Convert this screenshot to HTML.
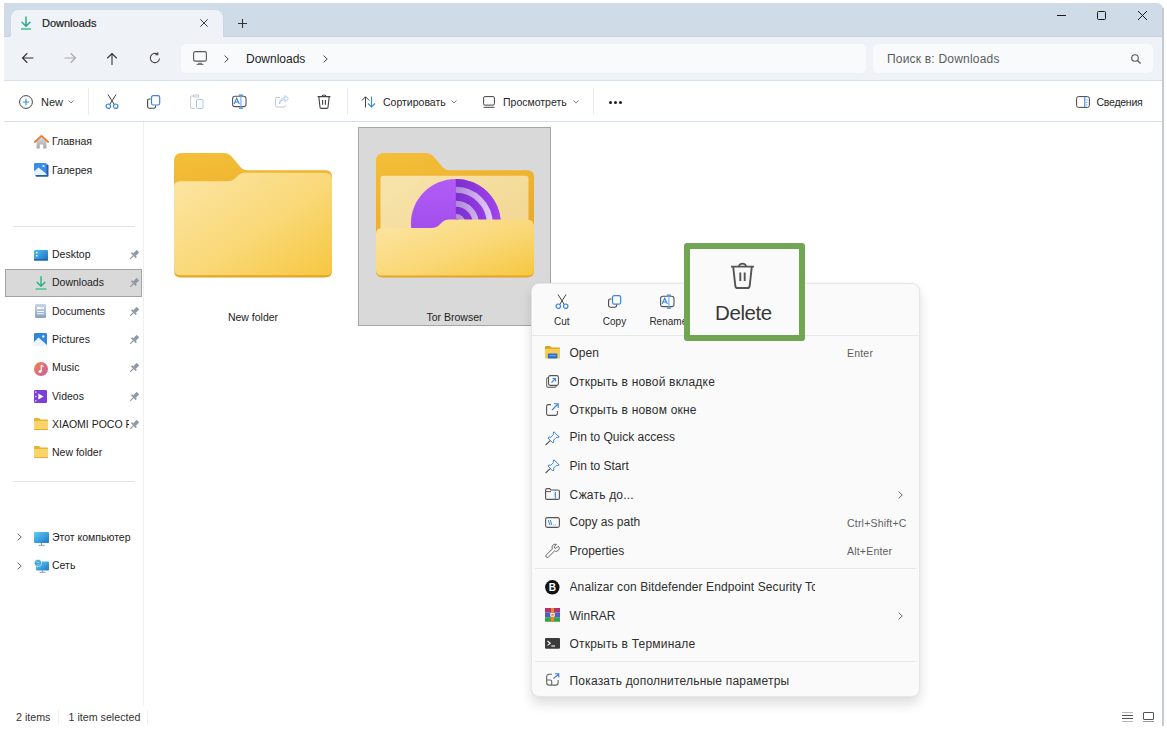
<!DOCTYPE html>
<html><head><meta charset="utf-8">
<style>
*{margin:0;padding:0;box-sizing:border-box}
html,body{width:1167px;height:729px;overflow:hidden;background:#fff;font-family:"Liberation Sans",sans-serif;color:#1a1a1a;position:relative}
.a{position:absolute}
.t{position:absolute;white-space:nowrap;line-height:1;font-size:11px}
svg.i{position:absolute;overflow:visible}
.side{font-size:10.5px;color:#1c1c1c}
.mi{font-size:12px;color:#222}
.sc{font-size:10px;color:#666}
</style></head><body>
<!-- ===== title bar ===== -->
<div class="a" style="left:4px;top:3px;width:1159px;height:34px;background:#cfdce8;border-radius:0 6px 0 0"></div>
<div class="a" style="left:1162px;top:8px;width:2px;height:718px;background:#c5cad3"></div>
<!-- tab -->
<div class="a" style="left:11px;top:10px;width:212px;height:27px;background:#eff3f8;border-radius:8px 8px 0 0"></div>
<div class="a" style="left:4px;top:33px;width:7px;height:4px;background:#eff3f8"></div>
<div class="a" style="left:4px;top:33px;width:7px;height:4px;background:#cfdce8;border-bottom:1px solid #c6d3df;border-right:1px solid #c6d3df;border-radius:0 0 3px 0"></div>
<div class="a" style="left:223px;top:33px;width:4px;height:4px;background:#eff3f8"></div>
<div class="a" style="left:223px;top:36px;width:939px;height:1px;background:#c6d3df"></div>
<div class="a" style="left:223px;top:10px;width:939px;height:27px;background:#cfdce8;border-bottom:1px solid #c6d3df;border-left:1px solid #cad7e3;border-radius:0 0 0 3px"></div>
<!-- tab content -->
<svg class="i" style="left:19.5px;top:16px" width="12" height="14" viewBox="0 0 12 14">
  <defs><linearGradient id="dl" x1="0" y1="0" x2="1" y2="1"><stop offset="0" stop-color="#3fc08a"/><stop offset="1" stop-color="#2a9d9a"/></linearGradient></defs>
  <path d="M6 1 V10 M2 6.3 L6 10.3 L10 6.3" stroke="url(#dl)" stroke-width="1.6" fill="none" stroke-linecap="round" stroke-linejoin="round"/>
  <path d="M1 13 H11" stroke="#3fbf8c" stroke-width="1.5"/>
</svg>
<div class="t" style="left:42px;top:18px;font-size:11px;-webkit-text-stroke:0.2px #1f1f1f;color:#1f1f1f">Downloads</div>
<svg class="i" style="left:200px;top:19px" width="8" height="8" viewBox="0 0 8 8"><path d="M0.3 0.3 L7.7 7.7 M7.7 0.3 L0.3 7.7" stroke="#333" stroke-width="0.95"/></svg>
<svg class="i" style="left:238px;top:19px" width="9" height="9" viewBox="0 0 9 9"><path d="M4.5 0 V9 M0 4.5 H9" stroke="#333" stroke-width="1.1"/></svg>
<!-- window controls -->
<div class="a" style="left:1057px;top:15px;width:9px;height:1px;background:#1a1a1a"></div>
<div class="a" style="left:1097px;top:11px;width:9px;height:9px;border:1.1px solid #1a1a1a;border-radius:1.5px"></div>
<svg class="i" style="left:1138px;top:11px" width="9" height="9" viewBox="0 0 9 9"><path d="M0 0 L9 9 M9 0 L0 9" stroke="#1a1a1a" stroke-width="1"/></svg>

<!-- ===== nav row ===== -->
<div class="a" style="left:4px;top:37px;width:1158px;height:43px;background:#eff3f8"></div>
<div class="a" style="left:4px;top:80px;width:1158px;height:1px;background:#d5dfea"></div>
<svg class="i" style="left:21px;top:52px" width="13" height="12" viewBox="0 0 13 12"><path d="M12 6 H1.5 M6 1.5 L1.5 6 L6 10.5" stroke="#333" stroke-width="1.1" fill="none" stroke-linecap="round"/></svg>
<svg class="i" style="left:64px;top:52px" width="13" height="12" viewBox="0 0 13 12"><path d="M1 6 H11.5 M7 1.5 L11.5 6 L7 10.5" stroke="#a8a8a8" stroke-width="1.1" fill="none" stroke-linecap="round"/></svg>
<svg class="i" style="left:106px;top:52px" width="12" height="13" viewBox="0 0 12 13"><path d="M6 12.5 V1.5 M1.5 6 L6 1.5 L10.5 6" stroke="#333" stroke-width="1.1" fill="none" stroke-linecap="round"/></svg>
<svg class="i" style="left:149px;top:52px" width="12" height="12" viewBox="0 0 12 12"><path d="M10.5 6.5 A4.6 4.6 0 1 1 8.6 2.3" stroke="#444" stroke-width="1.1" fill="none"/><path d="M8.8 0.3 V2.6 H6.5" stroke="#444" stroke-width="1.1" fill="none"/></svg>
<!-- address box -->
<div class="a" style="left:181px;top:44px;width:685px;height:29px;background:#f8fafc;border-radius:5px"></div>
<svg class="i" style="left:193px;top:51px" width="14" height="14" viewBox="0 0 14 14"><rect x="0.6" y="0.6" width="12.8" height="9.5" rx="1.6" stroke="#555" stroke-width="1.1" fill="none"/><path d="M5 12.3 H9 M3.5 13.4 H10.5" stroke="#666" stroke-width="1"/></svg>
<svg class="i" style="left:224px;top:55px" width="5" height="8" viewBox="0 0 5 8"><path d="M0.6 0.6 L4.2 4 L0.6 7.4" stroke="#444" stroke-width="1" fill="none"/></svg>
<div class="t" style="left:246px;top:53px;font-size:12px;color:#1f1f1f">Downloads</div>
<svg class="i" style="left:323px;top:55px" width="5" height="8" viewBox="0 0 5 8"><path d="M0.6 0.6 L4.2 4 L0.6 7.4" stroke="#444" stroke-width="1" fill="none"/></svg>
<!-- search box -->
<div class="a" style="left:873px;top:44px;width:280px;height:29px;background:#f8fafc;border-radius:5px"></div>
<div class="t" style="left:887px;top:53px;font-size:12px;letter-spacing:0.2px;color:#5c5c5c">Поиск в: Downloads</div>
<svg class="i" style="left:1131px;top:54px" width="10" height="10" viewBox="0 0 10 10"><circle cx="4" cy="4" r="3.3" stroke="#555" stroke-width="1.1" fill="none"/><path d="M6.5 6.5 L9.5 9.5" stroke="#555" stroke-width="1.2"/></svg>

<!-- ===== command bar ===== -->
<div class="a" style="left:4px;top:121px;width:1158px;height:1px;background:#d5dfea"></div>
<svg class="i" style="left:19px;top:95px" width="14" height="14" viewBox="0 0 14 14"><circle cx="7" cy="7" r="6.4" stroke="#444" stroke-width="1" fill="none"/><path d="M7 3.8 V10.2 M3.8 7 H10.2" stroke="#3a85e2" stroke-width="1.1"/></svg>
<div class="t" style="left:41px;top:97px;font-size:11px;color:#1f1f1f">New</div>
<svg class="i" style="left:68px;top:100px" width="6" height="4" viewBox="0 0 6 4"><path d="M0.5 0.5 L3 3 L5.5 0.5" stroke="#777" stroke-width="0.9" fill="none"/></svg>
<div class="a" style="left:88px;top:88px;width:1px;height:27px;background:#ececec"></div>
<!-- cut -->
<svg class="i" style="left:105px;top:94px" width="14" height="15" viewBox="0 0 14 15"><path d="M3 0.5 L9.3 10.5 M11 0.5 L4.7 10.5" stroke="#444" stroke-width="1"/><circle cx="3.3" cy="12.2" r="2.2" stroke="#3a85e2" stroke-width="1.2" fill="none"/><circle cx="10.7" cy="12.2" r="2.2" stroke="#3a85e2" stroke-width="1.2" fill="none"/></svg>
<!-- copy -->
<svg class="i" style="left:147px;top:95px" width="14" height="14" viewBox="0 0 14 14"><path d="M3.5 4 H2.2 A1.6 1.6 0 0 0 0.6 5.6 V11.6 A1.6 1.6 0 0 0 2.2 13.2 H7 A1.6 1.6 0 0 0 8.6 11.6 V10.5" stroke="#444" stroke-width="1.1" fill="none"/><rect x="4.5" y="0.6" width="8.2" height="9.4" rx="1.8" stroke="#3a85e2" stroke-width="1.2" fill="none"/></svg>
<!-- paste (disabled) -->
<svg class="i" style="left:190px;top:94px" width="14" height="15" viewBox="0 0 14 15"><path d="M3 2 H1.6 A1 1 0 0 0 0.6 3 V13.4 A1 1 0 0 0 1.6 14.4 H5" stroke="#c8c8c8" stroke-width="1" fill="none"/><path d="M3.5 1 H8.5 V3 H3.5 Z" stroke="#c8c8c8" stroke-width="1" fill="none"/><rect x="6.5" y="5.5" width="6.5" height="9" rx="1.2" stroke="#a9c8ef" stroke-width="1" fill="none"/></svg>
<!-- rename -->
<svg class="i" style="left:232px;top:94px" width="15" height="15" viewBox="0 0 15 15"><rect x="0.6" y="2.2" width="13.4" height="10.4" rx="2.4" stroke="#555" stroke-width="1.1" fill="none"/><path d="M8.9 1.2 V14.2" stroke="#7aaef0" stroke-width="1.2"/><path d="M6.9 1.2 H10.9 M6.9 14.2 H10.9" stroke="#3a85e2" stroke-width="1.2"/><path d="M2.1 10 L4.7 4.2 L7.3 10 M3.1 8 H6.3" stroke="#3a85e2" stroke-width="1.1" fill="none"/></svg>
<!-- share (disabled) -->
<svg class="i" style="left:275px;top:95px" width="14" height="13" viewBox="0 0 14 13"><path d="M5 2.5 H2 A1.4 1.4 0 0 0 0.6 3.9 V10.6 A1.4 1.4 0 0 0 2 12 H9 A1.4 1.4 0 0 0 10.4 10.6 V9.8" stroke="#c8c8c8" stroke-width="1" fill="none"/><path d="M4.5 9 C5 6 7 4.6 10 4.6 V6.8 L13.4 3.6 L10 0.6 V2.8 C6.5 2.8 4.5 5 4.5 9 Z" stroke="#a9c8ef" stroke-width="1" fill="none" stroke-linejoin="round"/></svg>
<!-- delete -->
<svg class="i" style="left:317px;top:94px" width="14" height="15" viewBox="0 0 14 15"><path d="M0.6 2.6 H13.4 M5 2.6 A2 1.6 0 0 1 9 2.6" stroke="#444" stroke-width="1.1" fill="none"/><path d="M1.8 2.6 L3 13.2 A1.3 1.3 0 0 0 4.3 14.4 H9.7 A1.3 1.3 0 0 0 11 13.2 L12.2 2.6" stroke="#444" stroke-width="1.1" fill="none"/><path d="M5.6 6 V10.8 M8.4 6 V10.8" stroke="#444" stroke-width="1.1"/></svg>
<div class="a" style="left:347px;top:88px;width:1px;height:27px;background:#ececec"></div>
<!-- sort -->
<svg class="i" style="left:361px;top:96px" width="15" height="12" viewBox="0 0 15 12"><path d="M4.5 11.5 V0.8 M0.8 4.5 L4.5 0.8 L8.2 4.5" stroke="#444" stroke-width="1" fill="none"/><path d="M10.5 0.5 V11 M7 7.5 L10.5 11 L14 7.5" stroke="#3a85e2" stroke-width="1.1" fill="none"/></svg>
<div class="t" style="left:383px;top:97px;font-size:10.5px;color:#1f1f1f">Сортировать</div>
<svg class="i" style="left:451px;top:100px" width="6" height="4" viewBox="0 0 6 4"><path d="M0.5 0.5 L3 3 L5.5 0.5" stroke="#777" stroke-width="0.9" fill="none"/></svg>
<!-- view -->
<svg class="i" style="left:483px;top:96px" width="12" height="12" viewBox="0 0 12 12"><rect x="0.6" y="0.6" width="10.8" height="8.5" rx="1.2" stroke="#444" stroke-width="1" fill="none"/><path d="M0.5 11.3 H11.5" stroke="#444" stroke-width="1"/></svg>
<div class="t" style="left:503px;top:97px;font-size:10.5px;color:#1f1f1f">Просмотреть</div>
<svg class="i" style="left:573px;top:100px" width="6" height="4" viewBox="0 0 6 4"><path d="M0.5 0.5 L3 3 L5.5 0.5" stroke="#777" stroke-width="0.9" fill="none"/></svg>
<div class="a" style="left:593px;top:88px;width:1px;height:27px;background:#ececec"></div>
<div class="a" style="left:609px;top:101px;width:3px;height:3px;border-radius:50%;background:#1f1f1f"></div>
<div class="a" style="left:614px;top:101px;width:3px;height:3px;border-radius:50%;background:#1f1f1f"></div>
<div class="a" style="left:619px;top:101px;width:3px;height:3px;border-radius:50%;background:#1f1f1f"></div>
<!-- details -->
<svg class="i" style="left:1075.5px;top:96px" width="14" height="12" viewBox="0 0 14 12"><rect x="0.6" y="0.6" width="12.8" height="10.8" rx="2" stroke="#444" stroke-width="1" fill="none"/><path d="M8.8 0.8 V11.2" stroke="#3a85e2" stroke-width="1.1"/><path d="M10.8 3.5 V4.5 M10.8 6 V7 M10.8 8.3 V9.3" stroke="#3a85e2" stroke-width="1"/></svg>
<div class="t" style="left:1096.5px;top:97px;font-size:10.5px;letter-spacing:-0.25px;color:#1f1f1f">Сведения</div>

<!-- ===== sidebar ===== -->
<div class="a" style="left:143px;top:122px;width:1px;height:584px;background:#f0f0f0"></div>
<div id="sidebar"><div class="a" style="left:13px;top:226px;width:122px;height:1px;background:#e3e3e3"></div>
<div class="a" style="left:13px;top:481px;width:122px;height:1px;background:#e3e3e3"></div>
<div class="a" style="left:5px;top:269px;width:137px;height:28px;background:#d9d9d9;border:1px solid #a3a3a3"></div>
<svg class="i" style="left:34px;top:135px" width="15" height="14" viewBox="0 0 15 14"><defs><linearGradient id="hm" x1="0" y1="0" x2="0" y2="1"><stop offset="0" stop-color="#d9d9d9"/><stop offset="1" stop-color="#a8a8a8"/></linearGradient></defs><path d="M2.5 6.5 V13.5 H5.8 V9.5 H9.2 V13.5 H12.5 V6.5 L7.5 2 Z" fill="url(#hm)"/><path d="M0.8 7 L7.5 0.9 L14.2 7" stroke="#e8792c" stroke-width="1.7" fill="none" stroke-linecap="round" stroke-linejoin="round"/></svg>
<div class="t side" style="left:52px;top:136.4px;">Главная</div>
<svg class="i" style="left:34px;top:163px" width="15" height="14" viewBox="0 0 15 14"><rect x="1.5" y="1.5" width="13" height="12.3" rx="1" fill="#1f5fb8"/><rect x="0" y="0" width="12.5" height="12" rx="1" fill="#3a8ee6"/><path d="M0 12 V8.5 L4.5 4.5 L12.5 11 V12 Z" fill="#e8f2fc"/><circle cx="9.5" cy="3" r="1.1" fill="#fff"/></svg>
<div class="t side" style="left:52px;top:164.7px;">Галерея</div>
<svg class="i" style="left:34px;top:250px" width="14" height="11" viewBox="0 0 14 11"><defs><linearGradient id="dk" x1="0" y1="0" x2="1" y2="1"><stop offset="0" stop-color="#4cc2ef"/><stop offset="1" stop-color="#1d6fc0"/></linearGradient></defs><rect x="0" y="0" width="14" height="10.5" rx="1.2" fill="url(#dk)"/><rect x="2" y="2" width="1.5" height="1.5" fill="#fff"/><rect x="2" y="5" width="1.5" height="1.5" fill="#fff"/><rect x="0" y="9.3" width="14" height="1.2" fill="#1a5aa3"/></svg>
<div class="t side" style="left:52px;top:249.1px;">Desktop</div>
<svg class="i" style="left:128.7px;top:250px" width="10" height="10" viewBox="0 0 10 10"><g transform="rotate(45 5 5)" fill="#8f99a4"><rect x="3.2" y="-0.6" width="3.6" height="5" rx="0.6"/><rect x="1.6" y="4.2" width="6.8" height="1.8" rx="0.6"/><rect x="4.4" y="5.8" width="1.2" height="4.6"/></g></svg>
<svg class="i" style="left:35px;top:276px" width="12" height="14" viewBox="0 0 12 14"><path d="M6 0.8 V10 M2.2 6.4 L6 10.2 L9.8 6.4" stroke="#36b38f" stroke-width="1.5" fill="none" stroke-linecap="round" stroke-linejoin="round"/><path d="M0.5 13 H11.5" stroke="#45c48f" stroke-width="1.5"/></svg>
<div class="t side" style="left:52px;top:277.1px;">Downloads</div>
<svg class="i" style="left:128.7px;top:278px" width="10" height="10" viewBox="0 0 10 10"><g transform="rotate(45 5 5)" fill="#8f99a4"><rect x="3.2" y="-0.6" width="3.6" height="5" rx="0.6"/><rect x="1.6" y="4.2" width="6.8" height="1.8" rx="0.6"/><rect x="4.4" y="5.8" width="1.2" height="4.6"/></g></svg>
<svg class="i" style="left:35px;top:304px" width="11" height="14" viewBox="0 0 11 14"><defs><linearGradient id="dc" x1="0" y1="0" x2="0" y2="1"><stop offset="0" stop-color="#c7d5ea"/><stop offset="1" stop-color="#8aa1c4"/></linearGradient></defs><rect x="0" y="0" width="11" height="14" rx="1.3" fill="url(#dc)"/><rect x="2" y="3" width="4.5" height="2.2" fill="#fff"/><rect x="7.3" y="3" width="1.7" height="2.2" fill="#fff"/><rect x="2" y="7" width="7" height="0.9" fill="#fff"/><rect x="2" y="9.3" width="7" height="0.9" fill="#fff"/></svg>
<div class="t side" style="left:52px;top:305.7px;">Documents</div>
<svg class="i" style="left:128.7px;top:307px" width="10" height="10" viewBox="0 0 10 10"><g transform="rotate(45 5 5)" fill="#8f99a4"><rect x="3.2" y="-0.6" width="3.6" height="5" rx="0.6"/><rect x="1.6" y="4.2" width="6.8" height="1.8" rx="0.6"/><rect x="4.4" y="5.8" width="1.2" height="4.6"/></g></svg>
<svg class="i" style="left:34px;top:333px" width="13" height="13" viewBox="0 0 13 13"><rect x="0" y="0" width="13" height="13" rx="1.2" fill="#2f86de"/><path d="M0 13 V9 L4.5 4.5 L13 12 V13 Z" fill="#eaf3fc"/><circle cx="9.3" cy="3.4" r="1.2" fill="#fff"/></svg>
<div class="t side" style="left:52px;top:334.1px;">Pictures</div>
<svg class="i" style="left:128.7px;top:335px" width="10" height="10" viewBox="0 0 10 10"><g transform="rotate(45 5 5)" fill="#8f99a4"><rect x="3.2" y="-0.6" width="3.6" height="5" rx="0.6"/><rect x="1.6" y="4.2" width="6.8" height="1.8" rx="0.6"/><rect x="4.4" y="5.8" width="1.2" height="4.6"/></g></svg>
<svg class="i" style="left:34px;top:361.5px" width="14" height="14" viewBox="0 0 14 14"><defs><linearGradient id="mu" x1="0" y1="0" x2="1" y2="1"><stop offset="0" stop-color="#f0864a"/><stop offset="1" stop-color="#c95aa4"/></linearGradient></defs><circle cx="7" cy="7" r="7" fill="url(#mu)"/><path d="M7.3 3 V9.3" stroke="#fff" stroke-width="1.2"/><path d="M7.3 3 C8.5 3.5 9.3 4.2 9.2 5.2" stroke="#fff" stroke-width="1" fill="none"/><circle cx="6" cy="9.5" r="1.5" fill="#fff"/></svg>
<div class="t side" style="left:52px;top:362.4px;">Music</div>
<svg class="i" style="left:128.7px;top:363px" width="10" height="10" viewBox="0 0 10 10"><g transform="rotate(45 5 5)" fill="#8f99a4"><rect x="3.2" y="-0.6" width="3.6" height="5" rx="0.6"/><rect x="1.6" y="4.2" width="6.8" height="1.8" rx="0.6"/><rect x="4.4" y="5.8" width="1.2" height="4.6"/></g></svg>
<svg class="i" style="left:34px;top:390px" width="13" height="13" viewBox="0 0 13 13"><rect x="0" y="0" width="13" height="13" rx="1.3" fill="#7b3fe0"/><path d="M4.3 3.4 L9.6 6.5 L4.3 9.6 Z" fill="#fff"/><rect x="1.2" y="1.5" width="1.2" height="1.3" fill="#fff"/><rect x="1.2" y="5.9" width="1.2" height="1.3" fill="#fff"/><rect x="1.2" y="10.2" width="1.2" height="1.3" fill="#fff"/></svg>
<div class="t side" style="left:52px;top:390.9px;">Videos</div>
<svg class="i" style="left:128.7px;top:392px" width="10" height="10" viewBox="0 0 10 10"><g transform="rotate(45 5 5)" fill="#8f99a4"><rect x="3.2" y="-0.6" width="3.6" height="5" rx="0.6"/><rect x="1.6" y="4.2" width="6.8" height="1.8" rx="0.6"/><rect x="4.4" y="5.8" width="1.2" height="4.6"/></g></svg>
<svg class="i" style="left:34px;top:418px" width="14" height="12" viewBox="0 0 14 12"><path d="M0 1 A1 1 0 0 1 1 0 H5 L6.5 1.6 H13 A1 1 0 0 1 14 2.6 V4 H0 Z" fill="#e9b42e"/><path d="M0 3 H14 V11 A1 1 0 0 1 13 12 H1 A1 1 0 0 1 0 11 Z" fill="#f8d46a"/><path d="M0 11 H14 V11.2 A0.8 0.8 0 0 1 13.2 12 H0.8 A0.8 0.8 0 0 1 0 11.2 Z" fill="#e6a92c"/></svg>
<div class="t side" style="left:52px;top:419.3px;width:77px;overflow:hidden;">XIAOMI POCO F</div>
<svg class="i" style="left:128.7px;top:420px" width="10" height="10" viewBox="0 0 10 10"><g transform="rotate(45 5 5)" fill="#8f99a4"><rect x="3.2" y="-0.6" width="3.6" height="5" rx="0.6"/><rect x="1.6" y="4.2" width="6.8" height="1.8" rx="0.6"/><rect x="4.4" y="5.8" width="1.2" height="4.6"/></g></svg>
<svg class="i" style="left:34px;top:446px" width="14" height="12" viewBox="0 0 14 12"><path d="M0 1 A1 1 0 0 1 1 0 H5 L6.5 1.6 H13 A1 1 0 0 1 14 2.6 V4 H0 Z" fill="#e9b42e"/><path d="M0 3 H14 V11 A1 1 0 0 1 13 12 H1 A1 1 0 0 1 0 11 Z" fill="#f8d46a"/><path d="M0 11 H14 V11.2 A0.8 0.8 0 0 1 13.2 12 H0.8 A0.8 0.8 0 0 1 0 11.2 Z" fill="#e6a92c"/></svg>
<div class="t side" style="left:52px;top:447.3px;">New folder</div>
<svg class="i" style="left:34px;top:532px" width="15" height="14" viewBox="0 0 15 14"><defs><linearGradient id="pc" x1="0" y1="0" x2="1" y2="1"><stop offset="0" stop-color="#5fd0f5"/><stop offset="1" stop-color="#1b78c8"/></linearGradient></defs><rect x="0" y="0" width="15" height="11" rx="1" fill="url(#pc)"/><path d="M7.5 11 V13 M4.5 13.3 H10.5" stroke="#8a9aab" stroke-width="1"/></svg>
<div class="t side" style="left:52px;top:531.9px;">Этот компьютер</div>
<svg class="i" style="left:34px;top:559px" width="15" height="14" viewBox="0 0 15 14"><defs><linearGradient id="nt" x1="0" y1="0" x2="1" y2="1"><stop offset="0" stop-color="#5fd0f5"/><stop offset="1" stop-color="#1b78c8"/></linearGradient></defs><rect x="2" y="2.5" width="13" height="9" rx="1" fill="url(#nt)"/><path d="M8.5 11.5 V13 M5.5 13.3 H11.5" stroke="#8a9aab" stroke-width="1"/><circle cx="4" cy="4" r="3.6" fill="#3aa0e0" stroke="#fff" stroke-width="0.6"/><path d="M2 3 C3 2.4 4 4 5.5 3.2 M3 6.5 C3.5 5.5 5 5.8 5.5 5" stroke="#bfe8a0" stroke-width="1" fill="none"/></svg>
<div class="t side" style="left:52px;top:560.3px;">Сеть</div>
<svg class="i" style="left:17px;top:533px" width="5" height="8" viewBox="0 0 5 8"><path d="M0.6 0.6 L4.2 4 L0.6 7.4" stroke="#666" stroke-width="1" fill="none"/></svg>
<svg class="i" style="left:17px;top:562px" width="5" height="8" viewBox="0 0 5 8"><path d="M0.6 0.6 L4.2 4 L0.6 7.4" stroke="#666" stroke-width="1" fill="none"/></svg></div><!--/sidebar-->

<!-- ===== content ===== -->
<div id="content"><svg width="0" height="0" style="position:absolute"><defs>
<linearGradient id="fback" x1="0" y1="0" x2="0.3" y2="1"><stop offset="0" stop-color="#f4bf38"/><stop offset="1" stop-color="#e5a424"/></linearGradient>
<linearGradient id="ffront" x1="0" y1="0" x2="1" y2="1"><stop offset="0" stop-color="#fde6a6"/><stop offset="0.55" stop-color="#f9d877"/><stop offset="1" stop-color="#f6c740"/></linearGradient>
<linearGradient id="fpaper" x1="0" y1="0" x2="1" y2="1"><stop offset="0" stop-color="#f8e4ab"/><stop offset="1" stop-color="#efd38c"/></linearGradient>
<linearGradient id="torl" x1="0" y1="0" x2="0" y2="1"><stop offset="0" stop-color="#b35cf7"/><stop offset="1" stop-color="#9343e6"/></linearGradient>
<linearGradient id="torr" x1="0" y1="0" x2="0" y2="1"><stop offset="0" stop-color="#a64ef0"/><stop offset="1" stop-color="#7a2dd0"/></linearGradient>
<clipPath id="torclip"><rect x="79.8" y="0" width="60" height="140"/></clipPath>
</defs></svg>
<svg class="i" style="left:174px;top:153px" width="158" height="125" viewBox="0 0 158 125"><path d="M0 8 Q0 0 8 0 H49 C53 0 55.5 1.2 58 4 L66.5 14 C68.5 16.3 70.5 17.3 74 17.3 H151.5 Q158 17.3 158 23.8 V117.5 Q158 124.5 151 124.5 H7 Q0 124.5 0 117.5 Z" fill="url(#fback)"/><path d="M0 34.5 Q0 28.2 6.3 28.2 H53 C57 28.2 59 27.4 61.5 25 L63.5 23 C66 20.6 68 19.8 71.5 19.8 H151.5 Q158 19.8 158 26.3 V116 Q158 122.3 151.7 122.3 H6.3 Q0 122.3 0 116 Z" fill="url(#ffront)"/></svg>
<div class="t" style="left:203px;top:312px;width:100px;text-align:center;font-size:10.5px;color:#1c1c1c">New folder</div>
<div class="a" style="left:358px;top:127px;width:193px;height:199px;background:#d9d9d9;border:1px solid #a6a6a6"></div>
<svg class="i" style="left:375.5px;top:153px" width="158" height="125" viewBox="0 0 158 125"><path d="M0 8 Q0 0 8 0 H49 C53 0 55.5 1.2 58 4 L66.5 14 C68.5 16.3 70.5 17.3 74 17.3 H151.5 Q158 17.3 158 23.8 V117.5 Q158 124.5 151 124.5 H7 Q0 124.5 0 117.5 Z" fill="url(#fback)"/><rect x="4.5" y="22.7" width="148" height="95" rx="3" fill="url(#fpaper)"/><defs><linearGradient id="ringg" gradientUnits="userSpaceOnUse" x1="79.8" y1="0" x2="118" y2="0"><stop offset="0" stop-color="#b088d8"/><stop offset="1" stop-color="#e6d0fc"/></linearGradient>
<linearGradient id="bandg" gradientUnits="userSpaceOnUse" x1="79.8" y1="0" x2="125" y2="0"><stop offset="0" stop-color="#7c2ed0"/><stop offset="1" stop-color="#a244ee"/></linearGradient></defs>
<circle cx="79.8" cy="70.8" r="44.9" fill="url(#torl)"/>
<g clip-path="url(#torclip)"><circle cx="79.8" cy="70.8" r="44.9" fill="url(#bandg)"/>
<circle cx="79.8" cy="70.8" r="34" fill="none" stroke="url(#ringg)" stroke-width="6"/>
<circle cx="79.8" cy="70.8" r="20" fill="none" stroke="url(#ringg)" stroke-width="6"/>
<circle cx="79.8" cy="70.8" r="7.5" fill="none" stroke="url(#ringg)" stroke-width="5"/>
</g><path d="M0 81.4 Q0 75 6.4 75 H55 C59 75 61 74.2 63.5 71.8 L65.5 69.8 C68 67.4 70 66.6 73.5 66.6 H151.5 Q158 67.2 158 73.7 V116.5 Q158 122.5 152 122.5 H6 Q0 122.5 0 116.5 Z" fill="url(#ffront)"/></svg>
<div class="t" style="left:404.5px;top:312px;width:100px;text-align:center;font-size:10.5px;color:#1c1c1c">Tor Browser</div></div><!--/content-->

<!-- ===== status bar ===== -->
<div class="t" style="left:16px;top:712px;font-size:10.7px;color:#333">2 items</div>
<div class="a" style="left:58px;top:710px;width:1px;height:14px;background:#eee"></div>
<div class="t" style="left:68.5px;top:712px;font-size:10.7px;color:#333">1 item selected</div>
<div class="a" style="left:147px;top:710px;width:1px;height:14px;background:#eee"></div>
<div class="a" style="left:1122px;top:712px;width:10.5px;height:1.3px;background:#b8b8b8"></div>
<div class="a" style="left:1122px;top:715px;width:10.5px;height:1.1px;background:#555"></div>
<div class="a" style="left:1122px;top:718px;width:10.5px;height:1.1px;background:#555"></div>
<div class="a" style="left:1122px;top:720.5px;width:10.5px;height:1.3px;background:#b8b8b8"></div>
<div class="a" style="left:1143px;top:711.5px;width:10.8px;height:8.5px;border:1.1px solid #555;border-radius:1px"></div>
<div class="a" style="left:1143px;top:720.5px;width:10.8px;height:1.3px;background:#999"></div>
<div id="menu"><div class="a" style="left:531px;top:283px;width:389px;height:414px;background:#fafafa;border:1px solid #e6e6e6;border-radius:8px;box-shadow:0 7px 12px rgba(0,0,0,0.13),0 0 3px rgba(0,0,0,0.04)"></div>
<svg class="i" style="left:555px;top:294px" width="14" height="15" viewBox="0 0 14 15"><path d="M3 0.5 L9.3 10.5 M11 0.5 L4.7 10.5" stroke="#444" stroke-width="1"/><circle cx="3.3" cy="12.2" r="2.2" stroke="#3a85e2" stroke-width="1.2" fill="none"/><circle cx="10.7" cy="12.2" r="2.2" stroke="#3a85e2" stroke-width="1.2" fill="none"/></svg>
<svg class="i" style="left:608px;top:295px" width="14" height="13" viewBox="0 0 14 13"><path d="M3.5 4 H2.2 A1.6 1.6 0 0 0 0.6 5.6 V10.6 A1.6 1.6 0 0 0 2.2 12.2 H7 A1.6 1.6 0 0 0 8.6 10.6 V9.5" stroke="#444" stroke-width="1.1" fill="none"/><rect x="4.5" y="0.6" width="8.2" height="8.6" rx="1.8" stroke="#3a85e2" stroke-width="1.2" fill="none"/></svg>
<svg class="i" style="left:660px;top:294px" width="15" height="15" viewBox="0 0 15 15"><rect x="0.6" y="2.2" width="13.4" height="10.4" rx="2.4" stroke="#555" stroke-width="1.1" fill="none"/><path d="M8.9 1.2 V14.2" stroke="#7aaef0" stroke-width="1.2"/><path d="M6.9 1.2 H10.9 M6.9 14.2 H10.9" stroke="#3a85e2" stroke-width="1.2"/><path d="M2.1 10 L4.7 4.2 L7.3 10 M3.1 8 H6.3" stroke="#3a85e2" stroke-width="1.1" fill="none"/></svg>
<div class="t" style="left:521.8px;top:316.9px;width:80px;text-align:center;font-size:10px;color:#2a2a2a">Cut</div>
<div class="t" style="left:574.5px;top:316.9px;width:80px;text-align:center;font-size:10px;color:#2a2a2a">Copy</div>
<div class="t" style="left:628.3px;top:316.9px;width:80px;text-align:center;font-size:10px;color:#2a2a2a">Rename</div>
<div class="a" style="left:532px;top:335px;width:387px;height:1px;background:#e8e8e8"></div>
<div class="a" style="left:535px;top:568px;width:381px;height:1px;background:#e8e8e8"></div>
<div class="a" style="left:535px;top:661px;width:381px;height:1px;background:#e8e8e8"></div>
<svg class="i" style="left:545px;top:346px" width="15" height="13" viewBox="0 0 15 13"><path d="M0 1 A1 1 0 0 1 1 0 H5 L6.5 1.5 H14 A1 1 0 0 1 15 2.5 V4 H0 Z" fill="#d9a21c"/><path d="M0 2.8 H15 V12.5 H0 Z" fill="#f7cd55"/><rect x="2.8" y="7.6" width="9.6" height="5" rx="0.8" fill="#2a6fd0"/><rect x="4.5" y="9.2" width="6.2" height="0.9" fill="#7fb2ee"/></svg>
<div class="t" style="left:569.5px;top:346.9px;font-size:12px;color:#2e2e2e;">Open</div>
<div class="t" style="left:847px;top:348.2px;font-size:10.5px;letter-spacing:0.2px;color:#5f5f5f">Enter</div>
<svg class="i" style="left:546px;top:375px" width="13" height="13" viewBox="0 0 13 13"><rect x="0.6" y="2.6" width="9.8" height="9.8" rx="1.6" stroke="#777" stroke-width="1.1" fill="#e8e8e8"/><rect x="2.6" y="0.6" width="9.8" height="9.8" rx="1.6" stroke="#555" stroke-width="1.1" fill="#fff"/><path d="M5.5 7.5 L9.5 3.5 M6.5 3.5 H9.5 V6.5" stroke="#3a85e2" stroke-width="1.1" fill="none"/></svg>
<div class="t" style="left:569.5px;top:375.7px;font-size:12px;color:#2e2e2e;letter-spacing:0.2px;">Открыть в новой вкладке</div>
<svg class="i" style="left:546px;top:403px" width="13" height="13" viewBox="0 0 13 13"><path d="M5 1.6 H2.4 A1.8 1.8 0 0 0 0.6 3.4 V10.6 A1.8 1.8 0 0 0 2.4 12.4 H9.6 A1.8 1.8 0 0 0 11.4 10.6 V8" stroke="#555" stroke-width="1.1" fill="none"/><path d="M6 7 L12 1 M8 0.8 H12.2 V5" stroke="#3a85e2" stroke-width="1.1" fill="none"/></svg>
<div class="t" style="left:569.5px;top:403.8px;font-size:12px;color:#2e2e2e;letter-spacing:0.2px;">Открыть в новом окне</div>
<svg class="i" style="left:545px;top:431px" width="15" height="14" viewBox="0 0 15 14"><path d="M9 0.8 L14.2 6 L12.8 6.7 L11.3 6.4 L8.6 9.1 L8.9 11 L7.9 12 L2.9 7 L3.9 6 L5.8 6.3 L8.5 3.6 L8.2 2.1 Z" stroke="#3a85e2" stroke-width="1" fill="none" stroke-linejoin="round"/><path d="M5.2 9.6 L0.6 14" stroke="#555" stroke-width="1.1"/></svg>
<div class="t" style="left:569.5px;top:431.4px;font-size:12px;color:#2e2e2e;">Pin to Quick access</div>
<svg class="i" style="left:545px;top:459px" width="15" height="14" viewBox="0 0 15 14"><path d="M9 0.8 L14.2 6 L12.8 6.7 L11.3 6.4 L8.6 9.1 L8.9 11 L7.9 12 L2.9 7 L3.9 6 L5.8 6.3 L8.5 3.6 L8.2 2.1 Z" stroke="#3a85e2" stroke-width="1" fill="none" stroke-linejoin="round"/><path d="M5.2 9.6 L0.6 14" stroke="#555" stroke-width="1.1"/></svg>
<div class="t" style="left:569.5px;top:459.8px;font-size:12px;color:#2e2e2e;">Pin to Start</div>
<svg class="i" style="left:545px;top:488px" width="15" height="12" viewBox="0 0 15 12"><path d="M0.6 2 A1.4 1.4 0 0 1 2 0.6 H4.6 L6 2 H13 A1.4 1.4 0 0 1 14.4 3.4 V10 A1.4 1.4 0 0 1 13 11.4 H2 A1.4 1.4 0 0 1 0.6 10 Z" stroke="#555" stroke-width="1.1" fill="none"/><path d="M0.6 3.6 H6" stroke="#555" stroke-width="1"/><path d="M10.5 2 V3 M9.6 4 L11 5 L9.6 6 L11 7 L9.6 8 L11 9 L10 10.8" stroke="#3a85e2" stroke-width="1" fill="none"/></svg>
<div class="t" style="left:569.5px;top:488.6px;font-size:12px;color:#2e2e2e;letter-spacing:0.2px;">Сжать до...</div>
<svg class="i" style="left:898px;top:491px" width="5" height="8" viewBox="0 0 5 8"><path d="M0.6 0.6 L4.2 4 L0.6 7.4" stroke="#666" stroke-width="1" fill="none"/></svg>
<svg class="i" style="left:545px;top:517px" width="15" height="11" viewBox="0 0 15 11"><rect x="0.6" y="0.6" width="13.8" height="9.8" rx="1.8" stroke="#555" stroke-width="1.1" fill="none"/><path d="M3.3 3 L4.8 8 M5.3 3 L6.8 8" stroke="#3a85e2" stroke-width="1"/><path d="M8.5 8 H9.2 M10.2 8 H10.9" stroke="#3a85e2" stroke-width="1"/></svg>
<div class="t" style="left:569.5px;top:516.4px;font-size:12px;color:#2e2e2e;">Copy as path</div>
<div class="t" style="left:847px;top:517.7px;font-size:10.5px;letter-spacing:0.2px;color:#5f5f5f">Ctrl+Shift+C</div>
<svg class="i" style="left:545px;top:544px" width="15" height="14" viewBox="0 0 15 14"><path d="M13.2 2.2 L11 4.4 L9.6 4 L9.2 2.6 L11.4 0.4 C9.5 -0.2 7.4 0.8 7.1 2.8 C7 3.6 7.1 4.3 7.4 4.9 L1.2 11.1 A1.5 1.5 0 0 0 3.3 13.2 L9.5 7 C10.1 7.3 10.8 7.4 11.6 7.3 C13.6 7 14.6 4.9 14 3 Z" stroke="#666" stroke-width="1" fill="none" stroke-linejoin="round"/></svg>
<div class="t" style="left:569.5px;top:544.6px;font-size:12px;color:#2e2e2e;">Properties</div>
<div class="t" style="left:847px;top:545.9px;font-size:10.5px;letter-spacing:0.2px;color:#5f5f5f">Alt+Enter</div>
<svg class="i" style="left:545px;top:580px" width="15" height="15" viewBox="0 0 15 15"><circle cx="7.3" cy="7.3" r="7.2" fill="#111"/><text x="7.4" y="11" text-anchor="middle" font-family="Liberation Sans" font-weight="bold" font-size="10" fill="#fff">B</text></svg>
<div class="t" style="left:569.5px;top:581.4px;font-size:12px;color:#2e2e2e;width:245px;overflow:hidden;letter-spacing:0.1px;">Analizar con Bitdefender Endpoint Security Tc</div>
<svg class="i" style="left:545px;top:608px" width="15" height="14" viewBox="0 0 15 14"><rect x="0" y="0" width="15" height="4.6" fill="#b8306a"/><rect x="0" y="4.6" width="15" height="4.6" fill="#4b5ccf"/><rect x="0" y="9.2" width="15" height="4.6" fill="#3aa14a"/><rect x="6" y="0" width="3" height="13.8" fill="#e9862e"/><rect x="5.3" y="5" width="4.4" height="3.6" fill="#fff"/><rect x="6.3" y="5.8" width="2.4" height="2" fill="#e9862e"/></svg>
<div class="t" style="left:569.5px;top:609.7px;font-size:12px;color:#2e2e2e;">WinRAR</div>
<svg class="i" style="left:898px;top:611.5px" width="5" height="8" viewBox="0 0 5 8"><path d="M0.6 0.6 L4.2 4 L0.6 7.4" stroke="#666" stroke-width="1" fill="none"/></svg>
<svg class="i" style="left:545px;top:638px" width="15" height="11" viewBox="0 0 15 11"><rect x="0" y="0" width="15" height="10.8" rx="1" fill="#3b3b3b"/><path d="M2.5 3 L5.3 5.2 L2.5 7.4" stroke="#fff" stroke-width="1.1" fill="none"/><path d="M6.3 8 H10" stroke="#fff" stroke-width="1.1"/></svg>
<div class="t" style="left:569.5px;top:638.0px;font-size:12px;color:#2e2e2e;letter-spacing:0.2px;">Открыть в Терминале</div>
<svg class="i" style="left:546px;top:673px" width="14" height="13" viewBox="0 0 14 13"><path d="M6 1.2 H3 A2.3 2.3 0 0 0 0.7 3.5 V9.8 A2.3 2.3 0 0 0 3 12.1 H9.8 A2.3 2.3 0 0 0 12.1 9.8 V7" stroke="#666" stroke-width="1.1" fill="none"/><path d="M0.7 7 H4.2 A1.5 1.5 0 0 1 5.7 8.5 V12" stroke="#666" stroke-width="1.1" fill="none"/><path d="M7.5 5.5 L12.8 0.8 M9 0.8 H12.8 V4.5" stroke="#3a85e2" stroke-width="1.1" fill="none"/></svg>
<div class="t" style="left:569.5px;top:674.5px;font-size:12px;color:#2e2e2e;letter-spacing:0.2px;">Показать дополнительные параметры</div>
<div class="a" style="left:684px;top:243px;width:121px;height:98px;background:#fafafa;border:6px solid #70a553;border-radius:3px"></div>
<svg class="i" style="left:730px;top:262px" width="25" height="27" viewBox="0 0 25 27"><path d="M1 4.6 H24 M9 4.6 A3.5 3 0 0 1 16 4.6" stroke="#555" stroke-width="1.9" fill="none"/><path d="M3.2 4.6 L5.3 23.8 A2.4 2.4 0 0 0 7.7 26 H17.3 A2.4 2.4 0 0 0 19.7 23.8 L21.8 4.6" stroke="#555" stroke-width="1.9" fill="none"/><path d="M10.3 10.5 V19 M14.7 10.5 V19" stroke="#555" stroke-width="1.9"/></svg>
<div class="t" style="left:715px;top:302.6px;font-size:20.5px;letter-spacing:-0.4px;color:#383838">Delete</div></div><!--/menu-->
</body></html>
